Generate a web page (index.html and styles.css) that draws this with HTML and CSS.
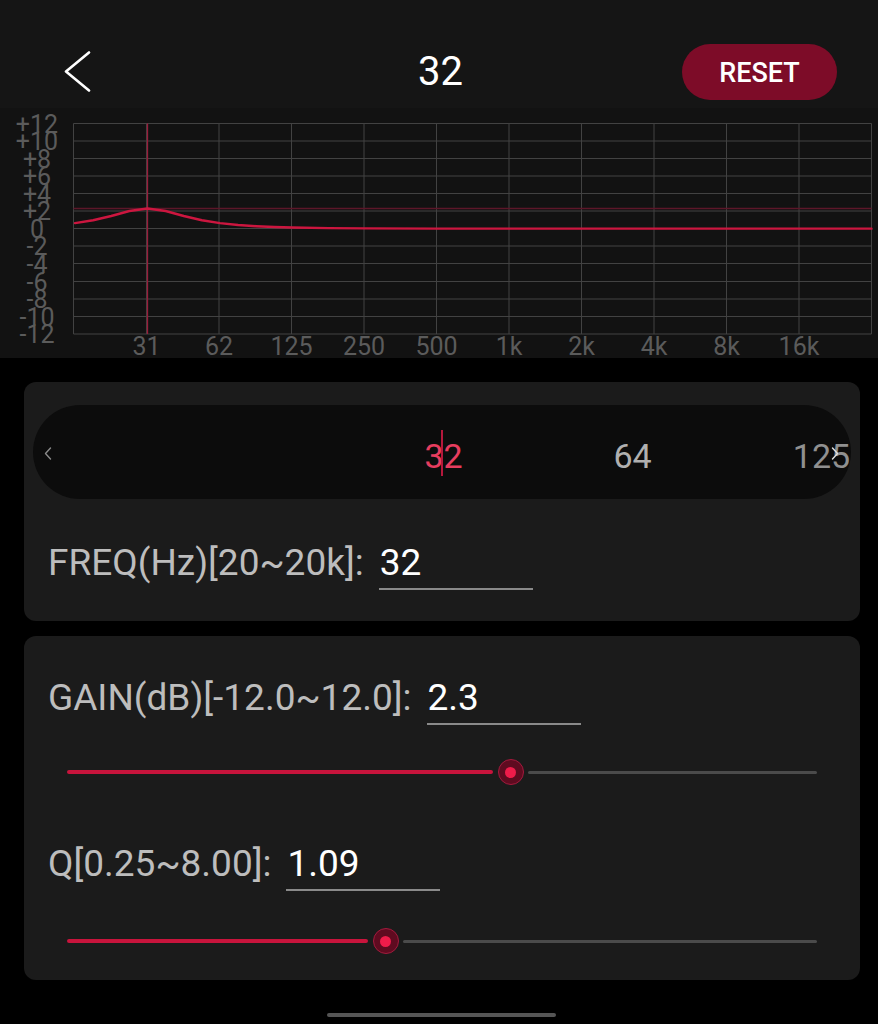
FILE: index.html
```html
<!DOCTYPE html>
<html lang="en">
<head>
    <meta charset="UTF-8">
    <meta name="viewport" content="width=device-width, initial-scale=1.0">
    <title>EQ Band 32</title>
    <link rel="stylesheet" href="styles.css">
</head>
<body>
    <div id="app">
        <div class="top-bar">
            <div class="back">
                <svg width="28" height="42" viewBox="0 0 28 42">
                    <path d="M26 1.5 L3 20.5 L26 39.5" class="back-stroke"/>
                </svg>
            </div>
            <div class="title">32</div>
            <div class="reset-wrap">
                <button class="reset">RESET</button>
            </div>
        </div>

        <!-- response graph -->
        <svg class="chart" width="878" height="250" viewBox="0 0 878 250">
            <g class="grid">
                <line x1="73.5" y1="15.5" x2="871.5" y2="15.5"/>
                <line x1="73.5" y1="33" x2="871.5" y2="33"/>
                <line x1="73.5" y1="50.5" x2="871.5" y2="50.5"/>
                <line x1="73.5" y1="68" x2="871.5" y2="68"/>
                <line x1="73.5" y1="85.5" x2="871.5" y2="85.5"/>
                <line x1="73.5" y1="103" x2="871.5" y2="103"/>
                <line x1="73.5" y1="120.5" x2="871.5" y2="120.5"/>
                <line x1="73.5" y1="138" x2="871.5" y2="138"/>
                <line x1="73.5" y1="155.5" x2="871.5" y2="155.5"/>
                <line x1="73.5" y1="173.5" x2="871.5" y2="173.5"/>
                <line x1="73.5" y1="191" x2="871.5" y2="191"/>
                <line x1="73.5" y1="208.5" x2="871.5" y2="208.5"/>
                <line x1="73.5" y1="226" x2="871.5" y2="226"/>

                <line x1="73.5" y1="15.5" x2="73.5" y2="226"/>
                <line x1="146.5" y1="15.5" x2="146.5" y2="226"/>
                <line x1="219" y1="15.5" x2="219" y2="226"/>
                <line x1="291.5" y1="15.5" x2="291.5" y2="226"/>
                <line x1="364" y1="15.5" x2="364" y2="226"/>
                <line x1="436.5" y1="15.5" x2="436.5" y2="226"/>
                <line x1="509" y1="15.5" x2="509" y2="226"/>
                <line x1="581.5" y1="15.5" x2="581.5" y2="226"/>
                <line x1="654" y1="15.5" x2="654" y2="226"/>
                <line x1="726.5" y1="15.5" x2="726.5" y2="226"/>
                <line x1="799" y1="15.5" x2="799" y2="226"/>
                <line x1="871.5" y1="15.5" x2="871.5" y2="226"/>
            </g>

            <g class="y-labels">
                <text x="37" y="24.5">+12</text>
                <text x="37" y="42">+10</text>
                <text x="37" y="59.5">+8</text>
                <text x="37" y="77">+6</text>
                <text x="37" y="94.5">+4</text>
                <text x="37" y="112">+2</text>
                <text x="37" y="129.5">0</text>
                <text x="37" y="147">-2</text>
                <text x="37" y="164.5">-4</text>
                <text x="37" y="182.5">-6</text>
                <text x="37" y="200">-8</text>
                <text x="37" y="217.5">-10</text>
                <text x="37" y="235">-12</text>
            </g>

            <g class="x-labels">
                <text x="146.5" y="247">31</text>
                <text x="219" y="247">62</text>
                <text x="291.5" y="247">125</text>
                <text x="364" y="247">250</text>
                <text x="436.5" y="247">500</text>
                <text x="509" y="247">1k</text>
                <text x="581.5" y="247">2k</text>
                <text x="654" y="247">4k</text>
                <text x="726.5" y="247">8k</text>
                <text x="799" y="247">16k</text>
            </g>

            <line class="marker" x1="73.5" y1="100.5" x2="871.5" y2="100.5"/>
            <line class="marker strong" x1="147.5" y1="15.5" x2="147.5" y2="226"/>

            <polyline class="curve" points="75,115.1 93.1,112.25 111.25,108 129.4,103 147.5,100.5 165.6,103 183.75,108 201.9,112.25 220,115.1 238.1,117 256.25,118.2 274.4,119 292.5,119.5 328.75,120.1 365,120.4 437,120.6 871.5,120.66"/>
        </svg>

        <div class="card freq-card">
            <div class="picker">
                <div class="picker-items">
                    <span class="band active">32</span>
                    <span class="band">64</span>
                    <span class="band far">125</span>
                </div>
                <span class="cursor"></span>
                <svg class="arrow arrow-left" width="8" height="13" viewBox="0 0 8 13">
                    <path d="M6.5 1 L1.5 6.5 L6.5 12"/>
                </svg>
                <svg class="arrow arrow-right" width="8" height="13" viewBox="0 0 8 13">
                    <path d="M1.5 1 L6.5 6.5 L1.5 12"/>
                </svg>
            </div>

            <div class="field">
                <span class="label">FREQ(Hz)[20~20k]:</span>
                <span class="value">32</span>
            </div>
        </div>

        <div class="card param-card">
            <div class="field">
                <span class="label">GAIN(dB)[-12.0~12.0]:</span>
                <span class="value">2.3</span>
            </div>
            <div class="slider gain-slider">
                <span class="track-on" style="width: 426px"></span>
                <span class="thumb"><span class="thumb-ring"><span class="thumb-dot"></span></span></span>
                <span class="track-off"></span>
            </div>

            <div class="field q-field">
                <span class="label">Q[0.25~8.00]:</span>
                <span class="value">1.09</span>
            </div>
            <div class="slider q-slider">
                <span class="track-on" style="width: 301px"></span>
                <span class="thumb"><span class="thumb-ring"><span class="thumb-dot"></span></span></span>
                <span class="track-off"></span>
            </div>
        </div>

        <div class="home-bar"></div>
    </div>
</body>
</html>
```

FILE: styles.css
```css
body {
    margin: 0;
    padding: 0;
    background-color: #000;
    font-family: Roboto, 'Noto Sans', sans-serif;
    color: #fff;
}

#app {
    width: 878px;
    height: 1024px;
    overflow: hidden;
}

/* header */
.top-bar {
    display: grid;
    grid-template-columns: 1fr auto 1fr;
    align-items: center;
    height: 73px;
    padding-top: 35px;
    background-color: #151515;
}

.back {
    padding-left: 63px;
    display: flex;
    align-items: center;
}

.back svg {
    display: block;
}

.back-stroke {
    fill: none;
    stroke: #fff;
    stroke-width: 2.6;
    stroke-linecap: round;
    stroke-linejoin: round;
}

.title {
    font-size: 40px;
    line-height: 47px;
    padding-left: 3px;
}

.reset-wrap {
    display: flex;
    justify-content: flex-end;
    padding-right: 41px;
}

.reset {
    width: 155px;
    height: 56px;
    border: none;
    border-radius: 28px;
    background-color: #7d0c28;
    color: #fff;
    font-family: Roboto, sans-serif;
    font-size: 27px;
    font-weight: 500;
    padding: 0;
    padding-top: 2px;
}

/* chart */
.chart {
    display: block;
    overflow: visible;
    background-color: #121212;
}

.grid line {
    stroke: #424242;
    stroke-width: 1;
}

.y-labels text,
.x-labels text {
    font-family: Roboto, sans-serif;
    font-size: 25px;
    fill: #5b5b5b;
    text-anchor: middle;
}

.marker {
    stroke: #5c1729;
    stroke-width: 1.5;
}

.marker.strong {
    stroke: #9a1c3b;
    stroke-width: 1.3;
}

.curve {
    fill: none;
    stroke: #cc163f;
    stroke-width: 2.4;
    stroke-linejoin: round;
    stroke-linecap: round;
}

/* cards */
.card {
    background-color: #1b1b1b;
    border-radius: 12px;
    margin-left: 24px;
    margin-right: 18px;
}

.freq-card {
    margin-top: 24px;
    padding: 23px 9px 31px;
}

.param-card {
    margin-top: 15px;
    padding: 40px 24px 19px;
}

.picker {
    position: relative;
    height: 94px;
    border-radius: 47px;
    background-color: #0c0c0c;
    overflow: hidden;
}

.picker-items {
    display: flex;
    padding-left: 316px;
    padding-top: 11px;
    line-height: 80px;
    font-size: 34px;
    white-space: nowrap;
}

.band {
    flex: 0 0 189px;
    text-align: center;
    color: #b0b0b0;
}

.band.active {
    color: #e63d5f;
}

.band.far {
    color: #909090;
}

.cursor {
    position: absolute;
    left: 408px;
    top: 25px;
    width: 2px;
    height: 46px;
    background-color: #b5183c;
}

.arrow {
    position: absolute;
    top: 42px;
}

.arrow path {
    fill: none;
    stroke-width: 1.4;
    stroke-linecap: round;
    stroke-linejoin: round;
}

.arrow-left {
    left: 11px;
}

.arrow-left path {
    stroke: #8a8a8a;
}

.arrow-right {
    left: 798px;
}

.arrow-right path {
    stroke: #e0e0e0;
}

/* text fields */
.field {
    display: flex;
    align-items: baseline;
    font-size: 37px;
    line-height: 43px;
}

.freq-card .field {
    margin-top: 42px;
    padding-left: 15px;
}

.label {
    color: #bdbdbd;
}

.value {
    width: 153px;
    margin-left: 15px;
    padding-left: 1px;
    padding-bottom: 4px;
    border-bottom: 2px solid #8a8a8a;
    color: #fff;
}

.q-field {
    margin-top: 50px;
}

/* sliders */
.slider {
    display: flex;
    align-items: center;
    height: 40px;
    margin: 27px 19px 0;
}

.q-slider {
    margin-top: 30px;
}

.track-on {
    height: 4px;
    border-radius: 2px;
    background-color: #c8143c;
}

.thumb {
    flex: 0 0 35px;
    display: flex;
    justify-content: center;
}

.thumb-ring {
    width: 26px;
    height: 26px;
    box-sizing: border-box;
    border-radius: 50%;
    border: 1.5px solid #a31a3d;
    background-color: #5f0b20;
    display: flex;
    align-items: center;
    justify-content: center;
}

.thumb-dot {
    width: 11px;
    height: 11px;
    border-radius: 50%;
    background-color: #ee1c4a;
}

.track-off {
    flex: 1;
    height: 3px;
    border-radius: 2px;
    background-color: #4b4b4b;
}

.home-bar {
    width: 229px;
    height: 4px;
    margin: 33px 0 0 327px;
    border-radius: 2px;
    background-color: #555;
}
```
